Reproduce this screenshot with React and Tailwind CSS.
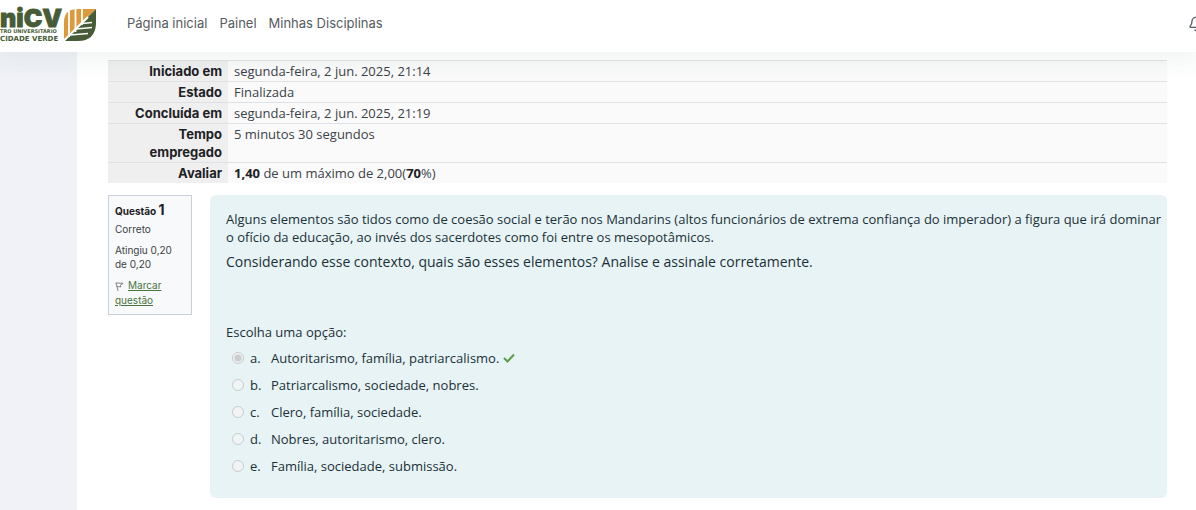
import { Bell } from "lucide-react";

const navLinks = ["Página inicial", "Painel", "Minhas Disciplinas"];

const summary = [
  { label: "Iniciado em", value: "segunda-feira, 2 jun. 2025, 21:14" },
  { label: "Estado", value: "Finalizada" },
  { label: "Concluída em", value: "segunda-feira, 2 jun. 2025, 21:19" },
  { label: "Tempo empregado", value: "5 minutos 30 segundos" },
  {
    label: "Avaliar",
    value: (
      <>
        <b className="text-[#1d2125]">1,40</b> de um máximo de 2,00(
        <b className="text-[#1d2125]">70</b>%)
      </>
    ),
  },
];

const options = [
  { letter: "a", text: "Autoritarismo, família, patriarcalismo.", correct: true },
  { letter: "b", text: "Patriarcalismo, sociedade, nobres." },
  { letter: "c", text: "Clero, família, sociedade." },
  { letter: "d", text: "Nobres, autoritarismo, clero." },
  { letter: "e", text: "Família, sociedade, submissão." },
];

function Logo() {
  return (
    <svg
      viewBox="0 0 97 44"
      className="h-11 w-[97px] shrink-0"
      fill="#475c36"
      role="img"
      aria-label="UniCV"
    >
      <text
        x="0"
        y="27"
        fontFamily="Inter, sans-serif"
        fontSize="25"
        fontWeight="900"
        stroke="#475c36"
        strokeWidth="0.8"
      >
        niCV
      </text>
      <g fontFamily="DejaVu Sans, sans-serif" fontWeight="700">
        <text x="0" y="33" fontSize="5">
          TRO UNIVERSITÁRIO
        </text>
        <text x="0" y="41" fontSize="7">
          CIDADE VERDE
        </text>
      </g>
      {/* leaf: orange half, green half, white veins */}
      <path fill="#dd9a3c" d="M64 40V22Q64 9 78 9h18z" />
      <path d="M96 9v15Q95 41 78 41H63.500z" />
      <g stroke="#fff" fill="none">
        <path strokeWidth="1.800" d="M69 8v29M75.500 8v24M82 8v17" />
        <path strokeWidth="2.200" d="M63 41.500L88 17" />
        <path strokeWidth="1.500" d="M82 23.500L92 22.500M76 29L92 27.500M70 35L88 33.500" />
      </g>
    </svg>
  );
}

function Header() {
  return (
    <header className="relative z-10 flex h-[52px] items-start overflow-x-clip bg-white shadow-[0_4px_24px_6px_rgba(40,70,60,0.06)]">
      <Logo />
      <nav className="ml-[30px] flex h-12 flex-1 items-center gap-3 font-[Inter,sans-serif] text-[13px] text-[#555b60]">
        {navLinks.map((link) => (
          <a key={link} href="#">
            {link}
          </a>
        ))}
      </nav>
      <button aria-label="Notificações" className="-mr-2 mt-4 shrink-0 text-[#555b60]">
        <Bell size={16} strokeWidth={2} />
      </button>
    </header>
  );
}

function SummaryTable() {
  return (
    <table className="w-full border-collapse text-[13px] leading-[18px]">
      <tbody>
        {summary.map((row) => (
          <tr key={row.label} className="border-t border-[#dee2e6]">
            <th
              scope="row"
              className="w-[120px] bg-[#efefef] py-px pl-6 pr-1.5 text-right align-top font-[Inter,sans-serif] font-bold text-[#1d2125]"
            >
              {row.label}
            </th>
            <td className="bg-[#fafafa] px-1.5 py-px align-top">{row.value}</td>
          </tr>
        ))}
      </tbody>
    </table>
  );
}

function QuestionInfo() {
  return (
    <aside className="w-[84px] shrink-0 border border-[#cad0d7] bg-[#f8f9fa] px-1.5 py-1.5 font-[Inter,sans-serif] text-[10px] leading-[14px] text-[#3b4248]">
      <h3 className="font-bold text-[#1d2125]">
        Questão <span className="text-sm leading-4">1</span>
      </h3>
      <p className="mt-1">Correto</p>
      <p className="mt-[7px]">Atingiu 0,20 de 0,20</p>
      <a href="#" className="mt-[7px] block leading-[15px] text-[#4a7440] underline">
        <svg viewBox="0 0 10 10" className="mr-1 inline size-[9px]" fill="none" stroke="#777">
          <path d="M1 1l8 .5L6 3.500 6.500 5.500 2 5M1 1l2.500 9" />
        </svg>
        Marcar questão
      </a>
    </aside>
  );
}

function Question() {
  return (
    <section className="flex-1 rounded-md bg-[#e7f3f5] pb-[19px] pl-4 pr-1 pt-[15px] text-[13px] leading-[18px] text-[#1c3038]">
      <p>
        Alguns elementos são tidos como de coesão social e terão nos Mandarins (altos funcionários
        de extrema confiança do imperador) a figura que irá dominar o ofício da educação, ao invés
        dos sacerdotes como foi entre os mesopotâmicos.
      </p>
      <p className="mt-[7px] text-sm leading-[18px]">
        Considerando esse contexto, quais são esses elementos? Analise e assinale corretamente.
      </p>
      <fieldset className="mt-[52px]">
        <legend>Escolha uma opção:</legend>
        <div className="mt-[3px]">
          {options.map((o) => (
            <div key={o.letter} className="flex h-[27px] items-center pl-1.5">
              <input
                type="radio"
                name="answer"
                id={`answer-${o.letter}`}
                defaultChecked={o.correct}
                disabled
                className="size-3"
              />
              <label htmlFor={`answer-${o.letter}`} className="ml-1.5 flex">
                <span className="w-[21px]">{o.letter}.</span>
                {o.text}
              </label>
              {o.correct && (
                <svg viewBox="0 0 12 10" className="ml-1 h-2.5 w-3" fill="none" stroke="#5a9e4b" strokeWidth="2">
                  <path d="M1 5l3.500 3.500L11 1.500" />
                </svg>
              )}
            </div>
          ))}
        </div>
      </fieldset>
    </section>
  );
}

export default function App() {
  return (
    <div className="min-h-screen bg-white font-['Open_Sans',sans-serif] text-[#3b4248]">
      <Header />
      <div className="flex min-h-[calc(100vh-52px)]">
        <div className="w-[77px] shrink-0 bg-[#f0f2f7]" />
        <main className="flex-1 pb-3 pl-[31px] pr-[29px] pt-2">
          <SummaryTable />
          <div className="mt-3 flex items-start gap-[18px]">
            <QuestionInfo />
            <Question />
          </div>
        </main>
      </div>
    </div>
  );
}
